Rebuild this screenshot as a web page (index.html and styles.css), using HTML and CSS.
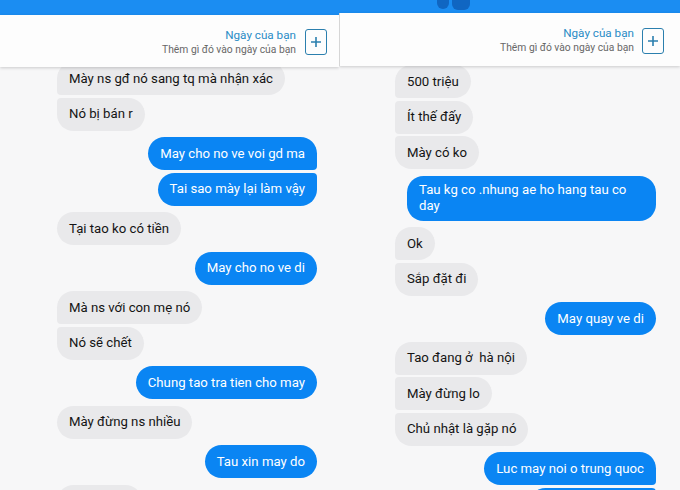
FILE: index.html
```html
<!DOCTYPE html>
<html lang="vi">

<head>
  <meta charset="UTF-8">
  <meta name="viewport" content="width=device-width, initial-scale=1.0">
  <title>Tin nhắn</title>
  <link rel="stylesheet" href="styles.css">
</head>

<body>
  <div class="screens">
    <section class="panel panel-left">
      <div class="topbar"></div>
      <div class="day">
        <div class="day-text">
          <p class="day-title">Ngày của bạn</p>
          <p class="day-sub">Thêm gì đó vào ngày của bạn</p>
        </div>
        <span class="day-add">
          <svg width="12" height="12" viewBox="0 0 12 12"><path d="M6 1v10M1 6h10" stroke="currentColor" stroke-width="1.6" fill="none"/></svg>
        </span>
      </div>

      <div class="thread">
        <div class="group in">
          <p class="msg">Mày ns gđ nó sang tq mà nhận xác</p>
          <p class="msg">Nó bị bán r</p>
        </div>
        <div class="group out">
          <p class="msg">May cho no ve voi gd ma</p>
          <p class="msg">Tai sao mày lại làm vậy</p>
        </div>
        <div class="group in">
          <p class="msg">Tại tao ko có tiền</p>
        </div>
        <div class="group out">
          <p class="msg">May cho no ve di</p>
        </div>
        <div class="group in">
          <p class="msg">Mà ns với con mẹ nó</p>
          <p class="msg">Nó sẽ chết</p>
        </div>
        <div class="group out">
          <p class="msg">Chung tao tra tien cho may</p>
        </div>
        <div class="group in">
          <p class="msg">Mày đừng ns nhiều</p>
        </div>
        <div class="group out">
          <p class="msg">Tau xin may do</p>
        </div>
        <div class="group in">
          <p class="msg msg-cut-in">&nbsp;</p>
        </div>
      </div>
    </section>

    <section class="panel panel-right">
      <div class="topbar">
        <span class="topbar-mark"></span>
        <span class="topbar-mark topbar-mark-wide"></span>
      </div>
      <div class="day">
        <div class="day-text">
          <p class="day-title">Ngày của bạn</p>
          <p class="day-sub">Thêm gì đó vào ngày của bạn</p>
        </div>
        <span class="day-add">
          <svg width="12" height="12" viewBox="0 0 12 12"><path d="M6 1v10M1 6h10" stroke="currentColor" stroke-width="1.6" fill="none"/></svg>
        </span>
      </div>

      <div class="thread">
        <div class="group in">
          <p class="msg">500 triệu</p>
          <p class="msg">Ít thế đấy</p>
          <p class="msg">Mày có ko</p>
        </div>
        <div class="group out">
          <p class="msg">Tau kg co .nhung ae ho hang tau co day</p>
        </div>
        <div class="group in">
          <p class="msg">Ok</p>
          <p class="msg">Sắp đặt đi</p>
        </div>
        <div class="group out">
          <p class="msg">May quay ve di</p>
        </div>
        <div class="group in">
          <p class="msg">Tao đang ở&nbsp; hà nội</p>
          <p class="msg">Mày đừng lo</p>
          <p class="msg">Chủ nhật là gặp nó</p>
        </div>
        <div class="group out">
          <p class="msg">Luc may noi o trung quoc</p>
          <p class="msg msg-cut-out">&nbsp;</p>
        </div>
      </div>
    </section>
  </div>
</body>

</html>
```

FILE: styles.css
```css
* {
  margin: 0;
  box-sizing: border-box;
}

body {
  font-family: Roboto, "Noto Sans", "Liberation Sans", sans-serif;
  background: #f7f7f8;
  color: #141414;
  overflow: hidden;
}

.screens {
  display: grid;
  grid-template-columns: 339px 341px;
  block-size: 490px;
  overflow: hidden;
}

.panel {
  display: flex;
  flex-direction: column;
  overflow: hidden;
  background: #f7f7f8;
}

.panel > *,
.group,
.msg {
  flex-shrink: 0;
}

/* top app bar, mostly cropped away */
.topbar {
  block-size: 15px;
  background: #1b8df2;
  display: flex;
  gap: 3px;
  padding-left: 98px;
}

.panel-right .topbar {
  block-size: 13px;
}

.topbar-mark {
  inline-size: 12px;
  block-size: 9px;
  background: #1066c2;
  border-radius: 0 0 6px 6px;
}

.topbar-mark-wide {
  inline-size: 18px;
  block-size: 10px;
}

/* "Ngày của bạn" card */
.day {
  position: relative;
  z-index: 1;
  block-size: 52px;
  display: flex;
  justify-content: flex-end;
  align-items: center;
  gap: 9px;
  padding-right: 12px;
  padding-top: 2px;
  background: #fdfdfd;
  box-shadow: 0 1px 3px rgba(0, 0, 0, 0.18);
}

.panel-right .day {
  block-size: 53px;
  padding-right: 16px;
  gap: 8px;
  border-left: 1px solid #d6d6d6;
}

.day-text {
  text-align: right;
}

.day-title {
  font-size: 11.7px;
  line-height: 15px;
  color: #2a8cc6;
}

.day-sub {
  font-size: 10.3px;
  line-height: 14px;
  color: #686868;
}

.day-add {
  inline-size: 22px;
  block-size: 26px;
  border: 1.6px solid #2b7fae;
  border-radius: 3px;
  color: #2b7fae;
  display: flex;
  align-items: center;
  justify-content: center;
}

.day-add svg {
  display: block;
}

/* conversation */
.thread {
  display: flex;
  flex-direction: column;
  gap: 6.5px;
  margin-top: -5px;
  padding: 0 22px 0 57px;
}

.panel-right .thread {
  margin-top: -1px;
  padding: 0 24px 0 56px;
}

.group {
  display: flex;
  flex-direction: column;
  gap: 2.5px;
}

.group.in {
  align-items: flex-start;
}

.group.out {
  align-items: flex-end;
}

.msg {
  display: flex;
  align-items: center;
  min-block-size: 33px;
  max-inline-size: 249px;
  padding: 6.5px 12px;
  font-size: 13.2px;
  line-height: 16px;
  border-radius: 16.5px;
}

.in .msg {
  background: #e9e9eb;
  color: #141414;
}

.out .msg {
  background: #0a85f3;
  color: #fff;
}

.in .msg:not(:last-child) {
  border-bottom-left-radius: 4px;
}

.in .msg:not(:first-child) {
  border-top-left-radius: 4px;
}

.out .msg:not(:last-child) {
  border-bottom-right-radius: 4px;
}

.out .msg:not(:first-child) {
  border-top-right-radius: 4px;
}

.msg-cut-in {
  inline-size: 85px;
}

.msg-cut-out {
  inline-size: 127px;
}
```
